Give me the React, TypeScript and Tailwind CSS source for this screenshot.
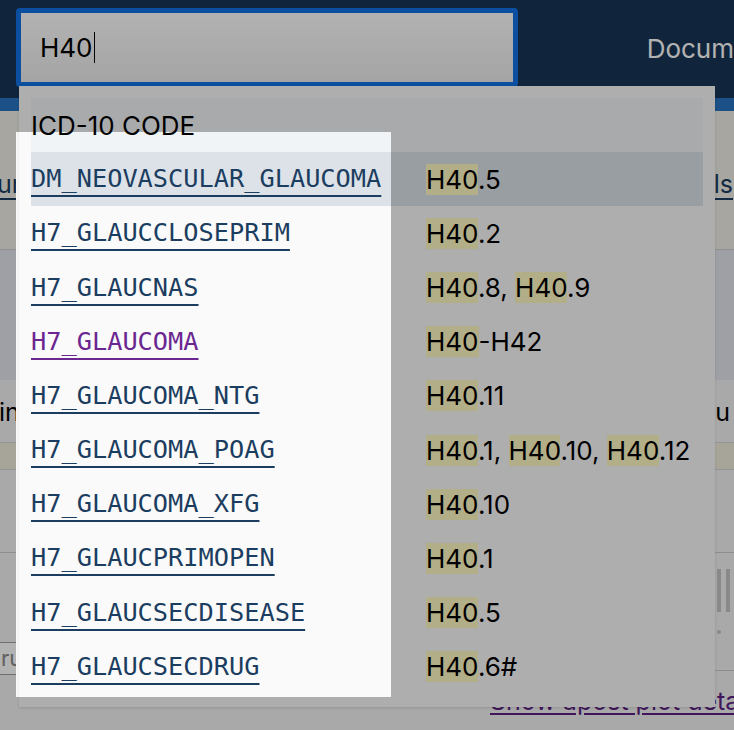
import React from "react";

type Row = { name: string; codes: string[]; visited?: boolean; active?: boolean };

const rows: Row[] = [
  { name: "DM_NEOVASCULAR_GLAUCOMA", codes: ["H40.5"], active: true },
  { name: "H7_GLAUCCLOSEPRIM", codes: ["H40.2"] },
  { name: "H7_GLAUCNAS", codes: ["H40.8", "H40.9"] },
  { name: "H7_GLAUCOMA", codes: ["H40-H42"], visited: true },
  { name: "H7_GLAUCOMA_NTG", codes: ["H40.11"] },
  { name: "H7_GLAUCOMA_POAG", codes: ["H40.1", "H40.10", "H40.12"] },
  { name: "H7_GLAUCOMA_XFG", codes: ["H40.10"] },
  { name: "H7_GLAUCPRIMOPEN", codes: ["H40.1"] },
  { name: "H7_GLAUCSECDISEASE", codes: ["H40.5"] },
  { name: "H7_GLAUCSECDRUG", codes: ["H40.6#"] },
];

const query = "H40";

// highlight the typed query inside a code
const Code = ({ code }: { code: string }) => {
  if (!code.startsWith(query)) return <>{code}</>;
  return (
    <>
      <mark className="bg-[#fff9c3] text-black">{query}</mark>
      {code.slice(query.length)}
    </>
  );
};

export default function App() {
  return (
    <div className="relative w-[734px] h-[730px] overflow-hidden bg-[#f2f2f2] font-['Inter',sans-serif] text-black">
      {/* top bar */}
      <div className="h-[98px] bg-[#173657] flex items-start pt-[8px] pl-[16px]">
        <div className="w-[511px] h-[79px] border-[5px] border-[#1272e6] rounded-[4px] bg-gradient-to-b from-white to-[#ececec] flex items-center pl-[19px]">
          <span className="text-[26px] leading-none">{query}</span>
          <span className="inline-block w-px h-[31px] bg-black ml-[1px]"></span>
        </div>
        <div className="ml-[129px] mt-[28px] text-[26px] text-white leading-none">Docum</div>
      </div>
      <div className="h-[13px] bg-[#2775c2]"></div>

      {/* page content under the menu */}
      <div className="h-[139px] bg-[#f0eee6] border-b border-[#cfcfcf] flex items-center justify-between text-[25px] text-[#1b3d60] pt-[10px]">
        <span className="-ml-[3px] underline underline-offset-[5px]">ur</span>
        <span className="underline underline-offset-[5px] pr-[1px]">Details</span>
      </div>
      <div className="h-[130px] bg-[#e2e6ec]"></div>
      <div className="h-[63px] bg-[#f3f3f3] border-b border-[#d6d6d6] flex items-center justify-between text-[25px] pt-[4px]">
        <span className="-ml-[1px]">in</span>
        <span className="pr-[4px]">Menu</span>
      </div>
      <div className="h-[27px] bg-[#f0ecdd] border-b border-[#d6d6d6]"></div>
      <div className="h-[83px] bg-[#f2f2f2] border-b border-[#cbcbcb]"></div>
      <div className="h-[118px] bg-[#f2f2f2] border-b border-[#cbcbcb] flex justify-between">
        <div className="mt-[89px] w-[18px] h-[33px] border-y border-[#a0a0a0] bg-white text-[22px] text-[#8a8a8a] leading-[31px] pl-[1px]">ru</div>
        <div className="flex flex-col items-start w-[17px] mt-[16px]">
          <div className="flex gap-[5px]">
            <span className="w-[4px] h-[43px] bg-[#c5c5c5]"></span>
            <span className="w-[4px] h-[43px] bg-[#c5c5c5]"></span>
          </div>
          <span className="w-[4px] h-[4px] rounded-full bg-[#c5c5c5] mt-[18px]"></span>
        </div>
      </div>
      <div className="pl-[490px] pt-[15px] text-[25px] leading-[30px] text-[#5e1f85] whitespace-nowrap underline underline-offset-[3px]">Show apost plot details</div>

      {/* white helper box of the walkthrough spotlight */}
      <div className="absolute left-[16px] top-[132px] w-[375px] h-[565px] bg-[#fafafa]"></div>

      {/* autocomplete menu */}
      <div className="absolute left-[19px] top-[86px] w-[696px] h-[621px] bg-[#fafafa] p-[12px] shadow-[0_1px_3px_rgba(0,0,0,0.12)]">
        <div className="h-[54px] bg-[#f1f4f7] flex items-center text-[26px]">ICD-10 CODE</div>
        {rows.map((r) => (
          <div key={r.name} className={`h-[54.2px] flex items-center ${r.active ? "bg-[#dce2e8]" : ""}`}>
            <a className={`w-[395px] font-['DejaVu_Sans_Mono',monospace] text-[25.3px] underline underline-offset-[7.5px] decoration-[1.5px] ${r.visited ? "text-[#6b2690]" : "text-[#1b3d60]"}`}>
              {r.name}
            </a>
            <span className="text-[26px]">
              {r.codes.map((c, i) => (
                <React.Fragment key={c + i}>
                  {i > 0 && ", "}
                  <Code code={c} />
                </React.Fragment>
              ))}
            </span>
          </div>
        ))}
      </div>

      {/* dim overlay with a hole over the first column */}
      <div className="absolute left-[16px] top-[132px] w-[375px] h-[565px] pointer-events-none shadow-[0_0_0_2000px_rgba(0,0,0,0.3)]"></div>
    </div>
  );
}
